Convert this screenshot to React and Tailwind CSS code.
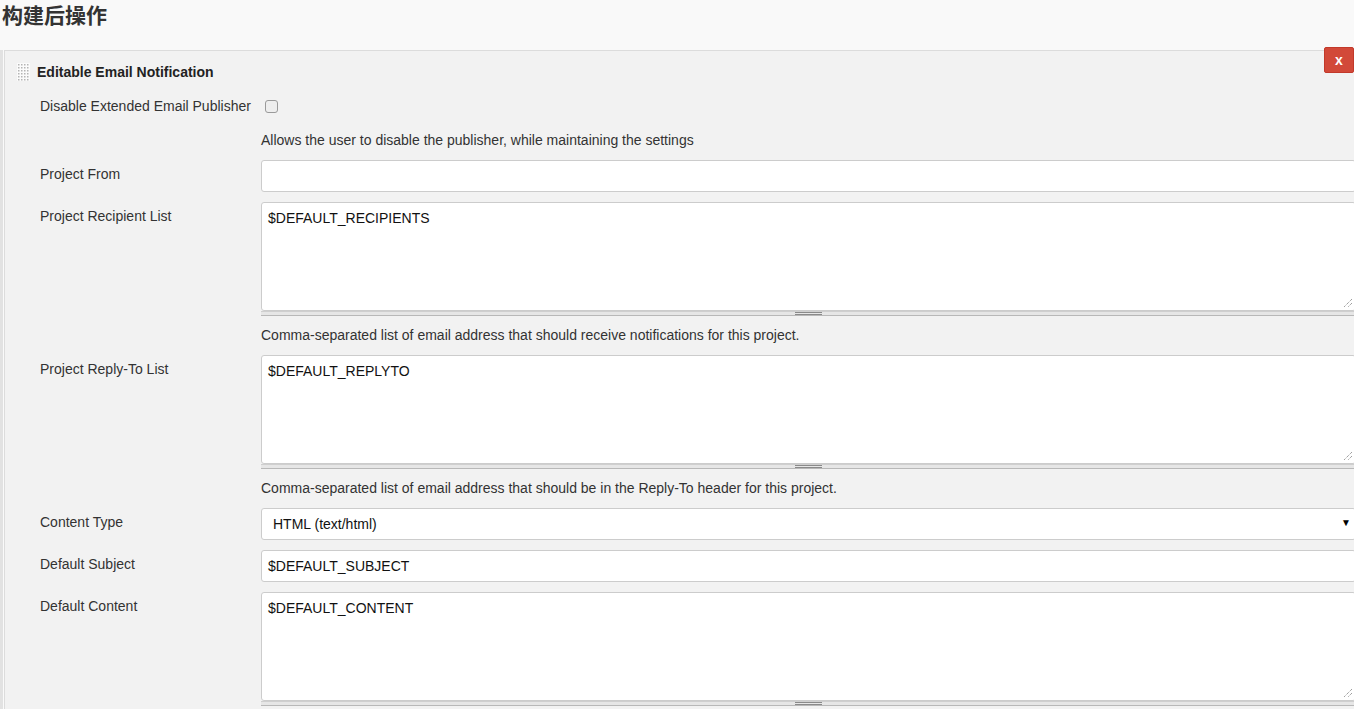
import React from "react";

function Grip() {
  const dots = [];
  for (let r = 0; r < 6; r++) {
    for (let c = 0; c < 4; c++) {
      dots.push(<rect key={r + "-" + c} x={1 + c * 3} y={1 + r * 3} width="1.5" height="1.5" fill="#b5b5b5" />);
    }
  }
  return (
    <svg width="13" height="18" viewBox="0 0 13 18" className="shrink-0">
      <rect x="0" y="0" width="13" height="18" fill="#fbfbfb" />
      {dots}
    </svg>
  );
}

function ResizeGrip() {
  return (
    <svg width="10" height="10" viewBox="0 0 10 10" className="absolute right-[2px] bottom-[2px]">
      <line x1="9" y1="1" x2="1" y2="9" stroke="#777" strokeWidth="1" strokeDasharray="1 1" />
      <line x1="9" y1="5" x2="5" y2="9" stroke="#777" strokeWidth="1" strokeDasharray="1 1" />
    </svg>
  );
}

function Handle() {
  return (
    <div className="h-[5px] border-t border-b border-t-[#cfcfcf] border-b-[#b8b8b8] bg-[#e6e6e6] flex justify-center items-center">
      <div className="w-[27px] h-[3px] border-t border-b border-[#8a8a8a]" />
    </div>
  );
}

function Row({ label, children, className = "" }) {
  return (
    <div className={"flex " + className}>
      <div className="w-[256px] pl-[35px] pt-[6px] leading-[16px] text-[14px] text-[#333] shrink-0">{label}</div>
      <div className="w-[1095px] shrink-0">{children}</div>
    </div>
  );
}

function Input({ value = "" }) {
  return (
    <div className="h-[32px] bg-white border border-[#cccccc] rounded-[3px] pl-[6px] flex items-center text-[14px] text-[#111]">
      {value}
    </div>
  );
}

function TextArea({ value }) {
  return (
    <div>
      <div className="relative h-[109px] bg-white border border-[#cccccc] rounded-[3px] pl-[6px] pt-[7px] leading-[16px] text-[14px] text-[#111]">
        {value}
        <ResizeGrip />
      </div>
      <Handle />
    </div>
  );
}

function Help({ children, className = "" }) {
  return (
    <div className={"pl-[256px] leading-[16px] text-[14px] text-[#333] " + className}>{children}</div>
  );
}

export default function App() {
  return (
    <div
      className="w-[1354px] h-[709px] overflow-hidden bg-[#f9f9f9]"
      style={{ fontFamily: '"Liberation Sans", Arial, "Noto Sans CJK SC", sans-serif' }}
    >
      <div className="h-[50px] pl-[2px]">
        <h2
          className="text-[21px] font-bold leading-[28px] text-[#333]"
          style={{ fontFamily: '"Noto Sans CJK SC", "Liberation Sans", sans-serif' }}
        >
          构建后操作
        </h2>
      </div>
      <div className="flex h-[659px]">
        <div className="w-[3px] bg-[#e2e2e2] shrink-0" />
        <div className="w-[1px] bg-[#fafafa] shrink-0" />
        <div className="relative flex-1 min-w-0 border-l border-t border-[#dcdcdc] bg-[#f2f2f2]">
          <div className="absolute right-0 top-[-4px] w-[30px] h-[26px] bg-[#d24939] border border-[#c2392a] rounded-[2px] flex items-center justify-center text-white font-bold text-[14px] leading-none z-10">
            x
          </div>
          <div className="h-[42px] flex items-center pl-[12px] gap-[7px]">
            <Grip />
            <span className="text-[14px] font-bold text-[#222]">Editable Email Notification</span>
          </div>
          <div className="h-[26px] flex items-center">
            <div className="pl-[35px] text-[14px] text-[#333]">Disable Extended Email Publisher</div>
            <div className="ml-[14px] w-[13px] h-[13px] rounded-[3px] border border-[#9a9a9a] bg-[#eeeeee]" />
          </div>
          <Help className="mt-[13px]">Allows the user to disable the publisher, while maintaining the settings</Help>
          <Row label="Project From" className="mt-[12px]">
            <Input />
          </Row>
          <Row label="Project Recipient List" className="mt-[10px]">
            <TextArea value="$DEFAULT_RECIPIENTS" />
          </Row>
          <Help className="mt-[11px]">Comma-separated list of email address that should receive notifications for this project.</Help>
          <Row label="Project Reply-To List" className="mt-[12px]">
            <TextArea value="$DEFAULT_REPLYTO" />
          </Row>
          <Help className="mt-[11px]">Comma-separated list of email address that should be in the Reply-To header for this project.</Help>
          <Row label="Content Type" className="mt-[12px]">
            <div className="relative h-[32px] bg-white border border-[#cccccc] rounded-[3px] pl-[11px] flex items-center text-[14px] text-[#111]">
              HTML (text/html)
              <span className="absolute left-[1079px] top-[9px] text-[10px] leading-none text-black">▼</span>
            </div>
          </Row>
          <Row label="Default Subject" className="mt-[10px]">
            <Input value="$DEFAULT_SUBJECT" />
          </Row>
          <Row label="Default Content" className="mt-[10px]">
            <TextArea value="$DEFAULT_CONTENT" />
          </Row>
        </div>
      </div>
    </div>
  );
}
